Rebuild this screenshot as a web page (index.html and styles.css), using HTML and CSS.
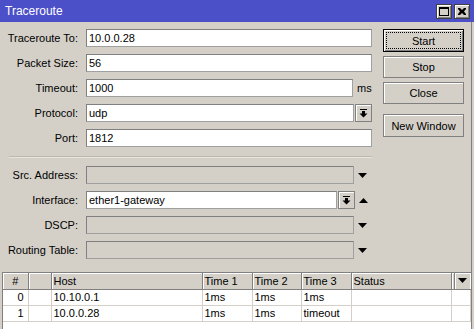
FILE: index.html
```html
<!DOCTYPE html>
<html>
<head>
<meta charset="utf-8">
<link rel="stylesheet" href="styles.css">
</head>
<body>
<div class="window">
  <div class="titlebar">
    <span class="title">Traceroute</span>
    <div class="tbtns">
      <span class="tbtn"><svg width="10" height="9" viewBox="0 0 10 9"><rect x="0.5" y="0.5" width="9" height="8" fill="none" stroke="#000"/><rect x="0" y="0" width="10" height="2" fill="#000"/></svg></span>
      <span class="tbtn"><svg width="8" height="7" viewBox="0 0 8 7"><path d="M0 0h2l2 2 2-2h2v1l-2 2.5 2 2.5v1h-2l-2-2-2 2h-2v-1l2-2.5-2-2.5z" fill="#000"/></svg></span>
    </div>
  </div>
  <div class="body">
    <div class="top">
      <div class="form">
        <div class="row"><label>Traceroute To:</label><div class="field full"><span class="input">10.0.0.28</span></div></div>
        <div class="row"><label>Packet Size:</label><div class="field full"><span class="input">56</span></div></div>
        <div class="row"><label>Timeout:</label><div class="field"><span class="input w267">1000</span><span class="unit">ms</span></div></div>
        <div class="row"><label>Protocol:</label><div class="field"><span class="input w268">udp</span><span class="dd"><svg width="9" height="9" viewBox="0 0 9 9"><rect x="1" y="0" width="7" height="1" fill="#000"/><rect x="3" y="2" width="3" height="3" fill="#000"/><path d="M0.5 4.5h8l-4 4z" fill="#000"/></svg></span></div></div>
        <div class="row"><label>Port:</label><div class="field full"><span class="input">1812</span></div></div>
        <div class="sep"></div>
        <div class="row"><label>Src. Address:</label><div class="field"><span class="input dis w268"></span><span class="arrow"><svg width="9" height="5" viewBox="0 0 9 5"><path d="M0 0h9l-4.5 5z" fill="#000"/></svg></span></div></div>
        <div class="row"><label>Interface:</label><div class="field"><span class="input w250">ether1-gateway</span><span class="dd"><svg width="9" height="9" viewBox="0 0 9 9"><rect x="1" y="0" width="7" height="1" fill="#000"/><rect x="3" y="2" width="3" height="3" fill="#000"/><path d="M0.5 4.5h8l-4 4z" fill="#000"/></svg></span><span class="arrow"><svg width="9" height="5" viewBox="0 0 9 5"><path d="M0 5h9l-4.5-5z" fill="#000"/></svg></span></div></div>
        <div class="row"><label>DSCP:</label><div class="field"><span class="input dis w268"></span><span class="arrow"><svg width="9" height="5" viewBox="0 0 9 5"><path d="M0 0h9l-4.5 5z" fill="#000"/></svg></span></div></div>
        <div class="row"><label>Routing Table:</label><div class="field"><span class="input dis w268"></span><span class="arrow"><svg width="9" height="5" viewBox="0 0 9 5"><path d="M0 0h9l-4.5 5z" fill="#000"/></svg></span></div></div>
      </div>
      <div class="buttons">
        <span class="btn default"><span class="focus">Start</span></span>
        <span class="btn">Stop</span>
        <span class="btn">Close</span>
        <span class="btn nw">New Window</span>
      </div>
    </div>
    <div class="tablewrap">
      <table class="grid">
        <thead>
          <tr><th class="c-num">#</th><th class="c-b"></th><th class="c-host">Host</th><th class="c-t">Time 1</th><th class="c-t2">Time 2</th><th class="c-t">Time 3</th><th class="c-st">Status</th><th class="c-sep"></th><th class="c-menu"><svg width="9" height="5" viewBox="0 0 9 5"><path d="M0 0h9l-4.5 5z" fill="#000"/></svg></th></tr>
        </thead>
        <tbody>
          <tr><td class="num">0</td><td></td><td>10.10.0.1</td><td>1ms</td><td>1ms</td><td>1ms</td><td></td><td colspan="2"></td></tr>
          <tr><td class="num">1</td><td></td><td>10.0.0.28</td><td>1ms</td><td>1ms</td><td>timeout</td><td></td><td colspan="2"></td></tr>
        </tbody>
      </table>
    </div>
  </div>
</div>
</body>
</html>
```

FILE: styles.css
```css
* { box-sizing: border-box; }
html, body { margin: 0; padding: 0; }
body {
  width: 474px;
  height: 329px;
  overflow: hidden;
  background: #d4d0c8;
  font-family: "Liberation Sans", Arial, sans-serif;
  font-size: 11px;
  color: #000;
}
.window { width: 474px; height: 329px; display: flex; flex-direction: column; }
.titlebar {
  height: 22px;
  background: #4b4fc8;
  display: flex;
  align-items: center;
  justify-content: space-between;
  padding-left: 5px;
  padding-right: 4px;
}
.title { color: #fff; font-size: 12px; }
.tbtns { display: flex; gap: 2px; }
.tbtn {
  width: 16px; height: 15px;
  background: #d4d0c8;
  border: 1px solid #404040;
  box-shadow: inset 1px 1px #fff, inset -1px -1px #808080;
  display: flex; align-items: center; justify-content: center;
}
.body {
  flex: 1;
  display: flex;
  flex-direction: column;
  border-right: 1px solid #808080;
  margin-right: 2px;
}
.top { display: flex; padding-top: 7px; }
.form { width: 372px; display: flex; flex-direction: column; gap: 7px; }
.row { display: flex; align-items: center; height: 18px; }
.row label { width: 80px; text-align: right; padding-right: 2px; flex: none; }
.field { margin-left: 6px; display: flex; align-items: center; flex: 1; height: 18px; }
.input {
  height: 18px;
  background: #fff;
  border: 1px solid #808080;
  border-right-color: #a0a0a0;
  border-bottom-color: #a0a0a0;
  padding-left: 2px;
  line-height: 16px;
  display: block;
  white-space: nowrap;
}
.full .input { width: 286px; }
.w267 { width: 267px; }
.w268 { width: 268px; }
.w250 { width: 251px; }
.input.dis { background: #d4d0c8; }
.unit { margin-left: 4px; }
.dd {
  width: 17px; height: 18px;
  margin-left: 1px;
  border: 1px solid #808080;
  background: #d4d0c8;
  box-shadow: inset 1px 1px #fff;
  display: flex; align-items: center; justify-content: center;
}
.arrow { width: 9px; height: 5px; margin-left: 4px; display: flex; }
.arrow svg { display: block; }
.sep {
  height: 2px;
  margin: 2px 0 1px 9px;
  border-top: 1px solid #bcb8b0;
  border-bottom: 1px solid #e8e5df;
}
.buttons {
  margin-left: 11px;
  width: 81px;
  display: flex;
  flex-direction: column;
  gap: 4px;
}
.btn {
  height: 22px;
  border: 1px solid #808080;
  box-shadow: inset 1px 1px #fff;
  background: #d4d0c8;
  display: flex; align-items: center; justify-content: center;
}
.btn.default { height: 23px; border: 1px solid #000; box-shadow: inset 1px 1px #fff, inset -1px -1px #808080; padding: 2px; }
.focus { flex: 1; align-self: stretch; border: 1px dotted #000; display: flex; align-items: center; justify-content: center; }
.btn.nw { margin-top: 6px; height: 23px; }
.tablewrap {
  margin: 13px 0 0 2px;
  flex: 1;
  background: #fff;
  border-left: 1px solid #808080;
  border-top: 1px solid #808080;
}
.grid { border-collapse: collapse; table-layout: fixed; width: 467px; }
.grid th {
  height: 16px;
  background: #d4d0c8;
  font-weight: normal;
  text-align: left;
  padding: 0 0 0 2px;
  border-right: 1px solid #808080;
  border-bottom: 1px solid #808080;
  box-shadow: inset 1px 1px #fff;
}
.grid td {
  height: 16px;
  padding: 0 0 0 2px;
  border-right: 1px solid #d4d0c8;
  border-bottom: 1px solid #d4d0c8;
  white-space: nowrap;
}
.grid td.num { text-align: right; padding-right: 4px; }
.grid th.c-num { width: 25px; text-align: center; padding: 0; }
.c-b { width: 23px; }
.c-host { width: 151px; }
.c-t { width: 50px; }
.c-t2 { width: 49px; }
.c-st { width: 100px; }
.grid th.c-sep { width: 3px; padding: 0; }
.grid th.c-menu { width: 16px; padding: 0; text-align: center; border-right: none; }
.c-menu svg { display: block; margin: 0 auto; }
```
